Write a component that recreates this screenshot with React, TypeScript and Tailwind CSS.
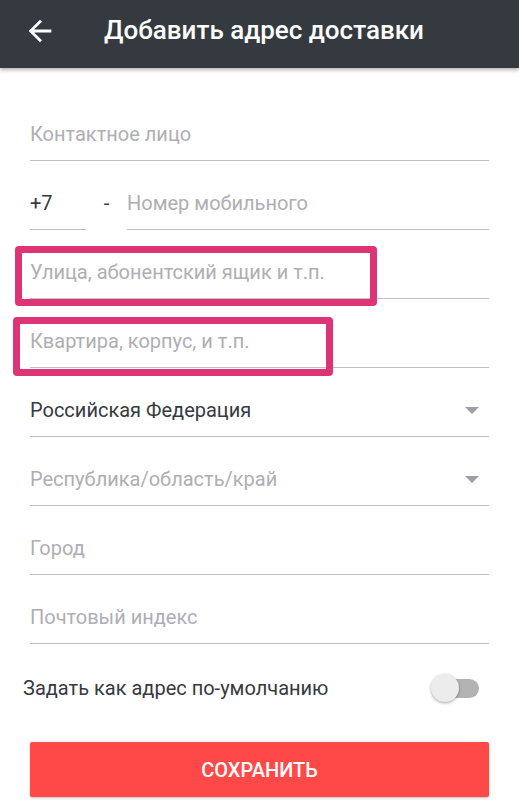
function BackArrow() {
  return (
    <svg width="34" height="34" viewBox="0 0 24 24" className="ml-[23px] shrink-0" fill="white">
      <path d="M20 11H7.83l5.59-5.59L12 4l-8 8 8 8 1.41-1.41L7.83 13H20v-2z" />
    </svg>
  );
}

function Caret() {
  return (
    <svg width="14" height="7" viewBox="0 0 14 7" className="shrink-0">
      <path d="M0 0 L14 0 L7 7 Z" fill="#9e9ea4" />
    </svg>
  );
}

function Field({
  label,
  value,
  caret,
  children,
}: {
  label: string;
  value?: boolean;
  caret?: boolean;
  children?: React.ReactNode;
}) {
  return (
    <div className="relative flex items-center justify-between border-b border-[#bfbfc5] pt-[30px] pb-[14px]">
      <span className={`text-[20px] leading-[24px] ${value ? "text-[#373940]" : "text-[#aeaeb4]"}`}>
        {label}
      </span>
      {caret && (
        <span className="mr-[10px]">
          <Caret />
        </span>
      )}
      {children}
    </div>
  );
}

export default function App() {
  return (
    <div className="h-[800px] w-[519px] overflow-hidden bg-white font-['Roboto',sans-serif]">
      <header className="relative z-10 flex h-[68px] items-center bg-[#353a40] pb-[7px] shadow-[0_2px_4px_rgba(0,0,0,0.3)]">
        <BackArrow />
        <h1 className="ml-[47px] text-[26px] font-medium text-white">Добавить адрес доставки</h1>
      </header>

      <form className="px-[30px] pt-[24px]">
        <Field label="Контактное лицо" />

        <div className="flex items-end">
          <div className="w-[56px] border-b border-[#bfbfc5] pt-[30px] pb-[14px] text-[20px] leading-[24px] text-[#373940]">
            +7
          </div>
          <div className="w-[41px] pb-[15px] text-center text-[20px] leading-[24px] text-[#373940]">-</div>
          <div className="flex-1 border-b border-[#bfbfc5] pt-[30px] pb-[14px] text-[20px] leading-[24px] text-[#aeaeb4]">
            Номер мобильного
          </div>
        </div>

        <Field label="Улица, абонентский ящик и т.п.">
          <div className="absolute top-[16px] left-[-15px] h-[60px] w-[362px] rounded-[4px] border-[7px] border-[#dc3474]" />
        </Field>
        <Field label="Квартира, корпус, и т.п.">
          <div className="absolute top-[18px] left-[-17px] h-[59px] w-[320px] rounded-[4px] border-[7px] border-[#dc3474]" />
        </Field>
        <Field label="Российская Федерация" value caret />
        <Field label="Республика/область/край" caret />
        <Field label="Город" />
        <Field label="Почтовый индекс" />

        <div className="flex items-center justify-between pt-[30px] pb-[30px]">
          <span className="-ml-[7px] text-[20px] leading-[24px] text-[#373940]">Задать как адрес по-умолчанию</span>
          <div className="relative mr-[10px] h-[28px] w-[48px]">
            <div className="absolute top-[5px] right-0 h-[19px] w-[36px] rounded-full bg-[#b3b3b3]" />
            <div className="absolute top-0 left-0 h-[28px] w-[28px] rounded-full bg-[#ececec] shadow-[0_1px_3px_rgba(0,0,0,0.35)]" />
          </div>
        </div>

        <button
          type="button"
          className="mt-[10px] flex h-[55px] w-full items-center justify-center rounded-[2px] bg-[#ff4848] text-[20px] font-medium text-white shadow-[0_1px_3px_rgba(0,0,0,0.25)]"
        >
          СОХРАНИТЬ
        </button>
      </form>
    </div>
  );
}
